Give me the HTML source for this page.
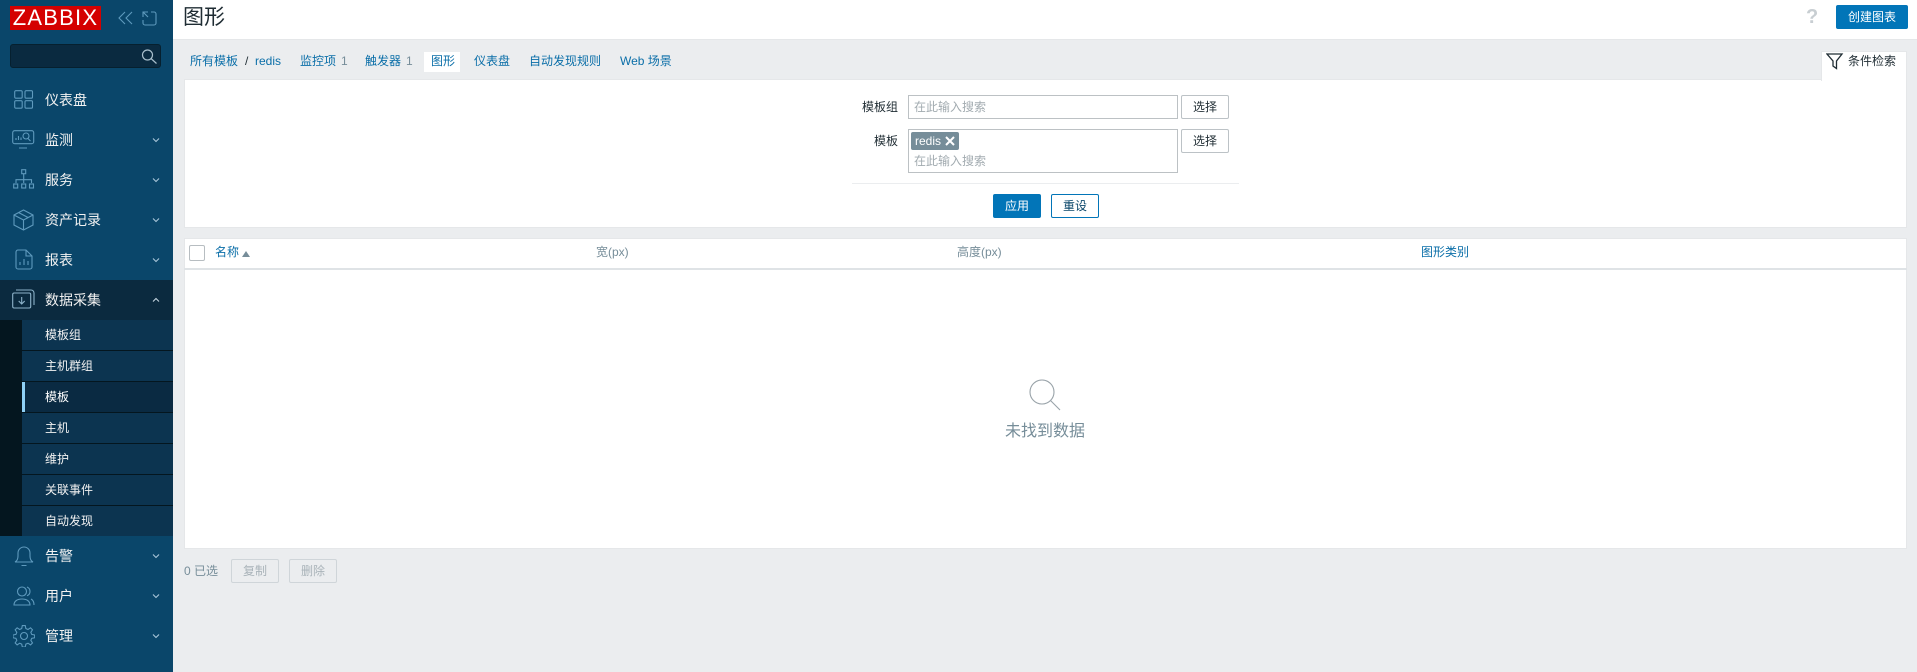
<!DOCTYPE html>
<html lang="zh"><head><meta charset="utf-8"><title>图形</title>
<style>
*{box-sizing:border-box}
html,body{margin:0;padding:0;width:1917px;height:672px;overflow:hidden;background:#ebedef;font-family:"Liberation Sans","Noto Sans CJK SC",sans-serif;font-size:12px;color:#1f2c33}
.a{position:absolute;white-space:nowrap}
.nav{left:45px;font-size:14px;line-height:20px;color:#f2f2f2}
.sub{left:45px;font-size:12px;line-height:16px;color:#f2f2f2}
.chev{position:absolute;left:151px;width:10px;height:8px}
.ic{position:absolute;fill:none;stroke:#5f9abd;stroke-width:1.100}
.sep{position:absolute;left:22px;width:151px;height:1px;background:#04161f}
.l{color:#0a6ea8;line-height:16px}
.btn{position:absolute;border:1px solid #bcc2c6;border-radius:2px;background:#fff;text-align:center;width:48px;height:24px;line-height:22px;color:#1f2c33}
.inp{position:absolute;border:1px solid #bcc1c4;background:#fff}
.ph{color:#a2abb0;line-height:16px}
</style></head><body>
<div class="a" style="left:0;top:0;width:173px;height:672px;background:#0a466a"></div>
<div class="a" style="left:0;top:280px;width:173px;height:40px;background:#0b2a3f"></div>
<div class="a" style="left:0;top:320px;width:22px;height:216px;background:#04161f"></div>
<div class="a" style="left:22px;top:320px;width:151px;height:216px;background:#0c3450"></div>
<div class="a" style="left:22px;top:382px;width:151px;height:31px;background:#0a2a42"></div>
<div class="a" style="left:22px;top:382px;width:3px;height:30px;background:#8fd0f5"></div>
<div class="sep" style="top:350px"></div><div class="sep" style="top:381px"></div><div class="sep" style="top:412px"></div><div class="sep" style="top:443px"></div><div class="sep" style="top:474px"></div><div class="sep" style="top:505px"></div>

<div class="a" style="left:10px;top:6px;width:91px;height:24px;background:#d40000;color:#fff;font-size:22px;line-height:24px;text-align:center;letter-spacing:1.200px">ZABBIX</div>
<svg class="ic" style="left:118px;top:10px" width="16" height="16" viewBox="0 0 16 16"><path d="M7 2 1 8l6 6M14 2 8 8l6 6"/></svg>
<svg class="ic" style="left:142px;top:11px" width="15" height="15" viewBox="0 0 15 15"><path d="M1 6V1h5M1 1l5 5M9 1h3a2 2 0 0 1 2 2v9a2 2 0 0 1-2 2H3a2 2 0 0 1-2-2v-3"/></svg>
<div class="a" style="left:10px;top:44px;width:151px;height:24px;background:#0a2a40;border:1px solid #06202f;border-radius:3px"></div>
<svg class="a" style="left:141px;top:49px;fill:none;stroke:#a9bfcc;stroke-width:1.200" width="17" height="16" viewBox="0 0 17 16"><circle cx="6.500" cy="6" r="5"/><path d="M10 9.500 15.500 14.500"/></svg>

<svg class="ic" style="left:14px;top:90px" width="20" height="19" viewBox="0 0 20 19"><rect x=".7" y=".7" width="7.500" height="7.500" rx="1.200"/><rect x="11" y=".7" width="7.500" height="7.500" rx="1.200"/><rect x=".7" y="10.700" width="7.500" height="7.500" rx="1.200"/><rect x="11" y="10.700" width="7.500" height="7.500" rx="1.200"/></svg>
<div class="a nav" style="top:90px">仪表盘</div>
<svg class="ic" style="left:12px;top:130px" width="23" height="19" viewBox="0 0 23 19"><rect x=".7" y=".7" width="21" height="13" rx="2"/><path d="M7 18h8M4 10V8M6.500 10V6M9 10V7.500"/><circle cx="14" cy="6" r="3"/><path d="m16 8.500 2.500 2.500"/></svg>
<div class="a nav" style="top:130px">监测</div>
<svg class="ic" style="left:13px;top:169px" width="22" height="20" viewBox="0 0 22 20"><rect x="8.700" y=".7" width="4" height="4"/><path d="M10.700 4.700v6M3 14v-3.300h15.500V14M10.700 10.700V14"/><rect x=".7" y="15" width="4" height="4"/><rect x="8.700" y="15" width="4" height="4"/><rect x="16.500" y="15" width="4" height="4"/></svg>
<div class="a nav" style="top:170px">服务</div>
<svg class="ic" style="left:13px;top:209px" width="21" height="22" viewBox="0 0 21 22"><path d="M10.500 1 20 6v10l-9.500 5L1 16V6zM1 6l9.500 5L20 6M10.500 11v10M5.500 3.500 15 8.500"/></svg>
<div class="a nav" style="top:210px">资产记录</div>
<svg class="ic" style="left:15px;top:249px" width="18" height="21" viewBox="0 0 18 21"><path d="M3 1h8l6 6v11a2 2 0 0 1-2 2H3a2 2 0 0 1-2-2V3a2 2 0 0 1 2-2zM11 1v6h6M5 16v-3M9 16v-6M13 16v-4"/></svg>
<div class="a nav" style="top:250px">报表</div>
<svg class="a" style="left:12px;top:289px;fill:none;stroke:#8db3ca;stroke-width:1.100" width="23" height="20" viewBox="0 0 23 20"><rect x=".7" y="4" width="18" height="15" rx="1.500"/><path d="M4 1h15a3 3 0 0 1 3 3v12M9.700 8v7M6.700 12l3 3 3-3"/></svg>
<div class="a nav" style="top:290px">数据采集</div>

<div class="a sub" style="top:327px">模板组</div>
<div class="a sub" style="top:358px">主机群组</div>
<div class="a sub" style="top:389px;color:#fff">模板</div>
<div class="a sub" style="top:420px">主机</div>
<div class="a sub" style="top:451px">维护</div>
<div class="a sub" style="top:482px">关联事件</div>
<div class="a sub" style="top:513px">自动发现</div>

<svg class="ic" style="left:14px;top:545px" width="20" height="22" viewBox="0 0 20 22"><path d="M1 17c2-1 3-3 3-6V8a6 6 0 0 1 12 0v3c0 3 1 5 3 6zM7.500 20.500h5"/></svg>
<div class="a nav" style="top:546px">告警</div>
<svg class="ic" style="left:13px;top:586px" width="22" height="20" viewBox="0 0 22 20"><circle cx="9" cy="5.500" r="4.500"/><path d="M1 19c0-4 3.500-6 8-6s8 2 8 6zM14 1c2 .8 3 2.500 3 4.500s-1 3.500-3 4.200M18 13c2 1 3 3 3 6"/></svg>
<div class="a nav" style="top:586px">用户</div>
<svg class="ic" style="left:13px;top:625px" width="22" height="22" viewBox="0 0 22 22"><circle cx="11" cy="11" r="3.500"/><path d="M9.500 1h3l.6 3 2.200 1 2.600-1.700 2 2-1.700 2.600.9 2.100 3 .6v2.800l-3 .6-.9 2.100 1.700 2.600-2 2-2.600-1.700-2.200.9-.6 3h-3l-.6-3-2.100-.9-2.600 1.700-2-2 1.700-2.600-.9-2.100-3-.6v-2.800l3-.6.9-2.100-1.700-2.600 2-2 2.600 1.700 2.100-1z" transform="translate(0 -.4) scale(.98)"/></svg>
<div class="a nav" style="top:626px">管理</div>

<svg class="chev" style="top:136px" viewBox="0 0 10 8" fill="none" stroke="#a9c6d9" stroke-width="1.100"><path d="M2 2.500 5 5.500 8 2.500"/></svg>
<svg class="chev" style="top:176px" viewBox="0 0 10 8" fill="none" stroke="#a9c6d9" stroke-width="1.100"><path d="M2 2.500 5 5.500 8 2.500"/></svg>
<svg class="chev" style="top:216px" viewBox="0 0 10 8" fill="none" stroke="#a9c6d9" stroke-width="1.100"><path d="M2 2.500 5 5.500 8 2.500"/></svg>
<svg class="chev" style="top:256px" viewBox="0 0 10 8" fill="none" stroke="#a9c6d9" stroke-width="1.100"><path d="M2 2.500 5 5.500 8 2.500"/></svg>
<svg class="chev" style="top:296px" viewBox="0 0 10 8" fill="none" stroke="#c5d6e0" stroke-width="1.100"><path d="M2 5.500 5 2.500 8 5.500"/></svg>
<svg class="chev" style="top:552px" viewBox="0 0 10 8" fill="none" stroke="#a9c6d9" stroke-width="1.100"><path d="M2 2.500 5 5.500 8 2.500"/></svg>
<svg class="chev" style="top:592px" viewBox="0 0 10 8" fill="none" stroke="#a9c6d9" stroke-width="1.100"><path d="M2 2.500 5 5.500 8 2.500"/></svg>
<svg class="chev" style="top:632px" viewBox="0 0 10 8" fill="none" stroke="#a9c6d9" stroke-width="1.100"><path d="M2 2.500 5 5.500 8 2.500"/></svg>

<div class="a" style="left:173px;top:0;width:1744px;height:40px;background:#fff;border-bottom:1px solid #e5e7e9"></div>
<div class="a" style="left:183px;top:3px;font-size:21px;line-height:30px;color:#1f2c33">图形</div>
<div class="a" style="left:1806px;top:4px;font-size:20px;line-height:26px;color:#c8ced2;font-weight:bold">?</div>
<div class="a" style="left:1836px;top:5px;width:72px;height:24px;border-radius:2px;background:#0275b8;color:#fff;text-align:center;line-height:24px">创建图表</div>

<div class="a l" style="left:190px;top:53px">所有模板</div>
<div class="a" style="left:245px;top:53px;line-height:16px;color:#1f2c33">/</div>
<div class="a l" style="left:255px;top:53px">redis</div>
<div class="a l" style="left:300px;top:53px">监控项</div>
<div class="a" style="left:341px;top:53px;line-height:16px;color:#768d99">1</div>
<div class="a l" style="left:365px;top:53px">触发器</div>
<div class="a" style="left:406px;top:53px;line-height:16px;color:#768d99">1</div>
<div class="a" style="left:424px;top:52px;width:36px;height:20px;background:#fff"></div>
<div class="a l" style="left:431px;top:53px">图形</div>
<div class="a l" style="left:474px;top:53px">仪表盘</div>
<div class="a l" style="left:529px;top:53px">自动发现规则</div>
<div class="a l" style="left:620px;top:53px">Web 场景</div>

<div class="a" style="left:184px;top:80px;width:1723px;height:148px;background:#fff;border:1px solid #e5e7e9;border-top:0"></div>
<div class="a" style="left:184px;top:79px;width:1637px;height:1px;background:#e5e7e9"></div>
<div class="a" style="left:1821px;top:51px;width:86px;height:30px;background:#fff;border:1px solid #e5e7e9;border-bottom:0"></div>
<svg class="a" style="left:1826px;top:53px;fill:none;stroke:#1f2c33;stroke-width:1.300" width="18" height="17" viewBox="0 0 18 17"><path d="M1 1h15L10.500 8v7.500L7 13V8z"/></svg>
<div class="a" style="left:1848px;top:53px;line-height:16px">条件检索</div>

<div class="a" style="left:862px;top:99px;line-height:16px;width:36px;text-align:right">模板组</div>
<div class="inp" style="left:908px;top:95px;width:270px;height:24px"></div>
<div class="a ph" style="left:914px;top:99px">在此输入搜索</div>
<div class="btn" style="left:1181px;top:95px">选择</div>
<div class="a" style="left:862px;top:133px;line-height:16px;width:36px;text-align:right">模板</div>
<div class="inp" style="left:908px;top:129px;width:270px;height:44px"></div>
<div class="a" style="left:911px;top:132px;width:48px;height:18px;background:#768d99;border-radius:2px;color:#fff;line-height:18px;padding-left:4px">redis</div>
<svg class="a" style="left:945px;top:136px;fill:none;stroke:#fff;stroke-width:2" width="10" height="10" viewBox="0 0 10 10"><path d="M1 1 9 9M9 1 1 9"/></svg>
<div class="a ph" style="left:914px;top:153px">在此输入搜索</div>
<div class="btn" style="left:1181px;top:129px">选择</div>
<div class="a" style="left:852px;top:183px;width:387px;height:1px;background:#ebedef"></div>
<div class="btn" style="left:993px;top:194px;background:#0275b8;border-color:#0275b8;color:#fff">应用</div>
<div class="btn" style="left:1051px;top:194px;border-color:#0275b8;color:#0a466a">重设</div>

<div class="a" style="left:184px;top:238px;width:1723px;height:311px;background:#fff;border:1px solid #e5e7e9"></div>
<div class="a" style="left:184px;top:268px;width:1723px;height:2px;background:#dfe3e6"></div>
<div class="a" style="left:189px;top:245px;width:16px;height:16px;border:1px solid #b7bdc1;border-radius:2px;background:#fff"></div>
<div class="a l" style="left:215px;top:244px">名称</div>
<div class="a" style="left:242px;top:251px;width:0;height:0;border-left:4px solid transparent;border-right:4px solid transparent;border-bottom:6px solid #768d99"></div>
<div class="a" style="left:596px;top:244px;line-height:16px;color:#768d99">宽(px)</div>
<div class="a" style="left:957px;top:244px;line-height:16px;color:#768d99">高度(px)</div>
<div class="a l" style="left:1421px;top:244px">图形类别</div>

<svg class="a" style="left:1029px;top:379px;fill:none;stroke:#98a2a8;stroke-width:1.100" width="34" height="34" viewBox="0 0 34 34"><circle cx="13" cy="13" r="12"/><path d="M21.500 21.500 31 31"/></svg>
<div class="a" style="left:1005px;top:421px;font-size:16px;line-height:22px;color:#768d99">未找到数据</div>

<div class="a" style="left:184px;top:563px;line-height:16px;color:#768d99">0 已选</div>
<div class="btn" style="left:231px;top:559px;background:#ebedef;border-color:#cfd5d9;color:#a9b3b9">复制</div>
<div class="btn" style="left:289px;top:559px;background:#ebedef;border-color:#cfd5d9;color:#a9b3b9">删除</div>
</body></html>
